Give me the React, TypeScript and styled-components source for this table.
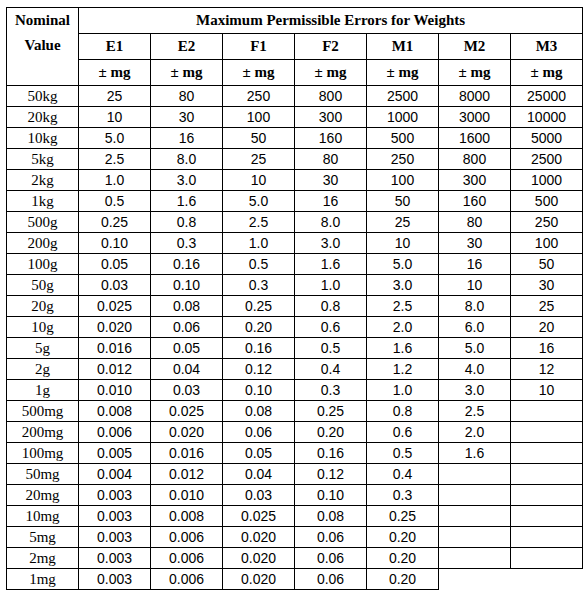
import React from 'react';
import styled, { createGlobalStyle } from 'styled-components';

const GlobalStyle = createGlobalStyle`
  html, body {
    margin: 0;
    padding: 0;
    background: #ffffff;
  }
`;

const Page = styled.div`
  padding: 7px 0 0 6px;
  background: #ffffff;
`;

const Table = styled.table`
  table-layout: fixed;
  width: 576px;
  border-collapse: collapse;
  color: #000000;
`;

const Col = styled.col`
  width: 72px;
`;

const HeadRow = styled.tr`
  height: 26px;
`;

const HeadCell = styled.th<{ $top?: boolean }>`
  border: 1px solid #000;
  padding: 0;
  font-family: 'Liberation Serif', 'Times New Roman', serif;
  font-weight: bold;
  font-size: 15px;
  text-align: center;
  vertical-align: ${(p) => (p.$top ? 'top' : 'middle')};
`;

const NominalHead = styled(HeadCell)`
  line-height: 25px;
  padding-top: 0;
`;

const UnitCell = styled(HeadCell)`
  font-size: 15px;
`;

const Row = styled.tr`
  height: 21px;
`;

const NameCell = styled.td`
  border: 1px solid #000;
  padding: 0;
  font-family: 'Liberation Serif', 'Times New Roman', serif;
  font-size: 15px;
  line-height: 18px;
  text-align: center;
`;

const ValueCell = styled.td`
  border: 1px solid #000;
  padding: 0;
  font-family: 'Liberation Sans', Arial, sans-serif;
  font-size: 14px;
  line-height: 18px;
  text-align: center;
`;

const classes = ['E1', 'E2', 'F1', 'F2', 'M1', 'M2', 'M3'];

// null = no cell at all, '' = empty bordered cell
const rows: [string, (string | null)[]][] = [
  ['50kg', ['25', '80', '250', '800', '2500', '8000', '25000']],
  ['20kg', ['10', '30', '100', '300', '1000', '3000', '10000']],
  ['10kg', ['5.0', '16', '50', '160', '500', '1600', '5000']],
  ['5kg', ['2.5', '8.0', '25', '80', '250', '800', '2500']],
  ['2kg', ['1.0', '3.0', '10', '30', '100', '300', '1000']],
  ['1kg', ['0.5', '1.6', '5.0', '16', '50', '160', '500']],
  ['500g', ['0.25', '0.8', '2.5', '8.0', '25', '80', '250']],
  ['200g', ['0.10', '0.3', '1.0', '3.0', '10', '30', '100']],
  ['100g', ['0.05', '0.16', '0.5', '1.6', '5.0', '16', '50']],
  ['50g', ['0.03', '0.10', '0.3', '1.0', '3.0', '10', '30']],
  ['20g', ['0.025', '0.08', '0.25', '0.8', '2.5', '8.0', '25']],
  ['10g', ['0.020', '0.06', '0.20', '0.6', '2.0', '6.0', '20']],
  ['5g', ['0.016', '0.05', '0.16', '0.5', '1.6', '5.0', '16']],
  ['2g', ['0.012', '0.04', '0.12', '0.4', '1.2', '4.0', '12']],
  ['1g', ['0.010', '0.03', '0.10', '0.3', '1.0', '3.0', '10']],
  ['500mg', ['0.008', '0.025', '0.08', '0.25', '0.8', '2.5', '']],
  ['200mg', ['0.006', '0.020', '0.06', '0.20', '0.6', '2.0', '']],
  ['100mg', ['0.005', '0.016', '0.05', '0.16', '0.5', '1.6', '']],
  ['50mg', ['0.004', '0.012', '0.04', '0.12', '0.4', '', '']],
  ['20mg', ['0.003', '0.010', '0.03', '0.10', '0.3', '', '']],
  ['10mg', ['0.003', '0.008', '0.025', '0.08', '0.25', '', '']],
  ['5mg', ['0.003', '0.006', '0.020', '0.06', '0.20', '', '']],
  ['2mg', ['0.003', '0.006', '0.020', '0.06', '0.20', '', '']],
  ['1mg', ['0.003', '0.006', '0.020', '0.06', '0.20', null, null]],
];

const App: React.FC = () => {
  return (
    <>
      <GlobalStyle />
      <Page>
        <Table>
          <colgroup>
            {Array.from({ length: 8 }).map((_, i) => (
              <Col key={i} />
            ))}
          </colgroup>
          <thead>
            <HeadRow>
              <NominalHead rowSpan={3} $top>
                Nominal
                <br />
                Value
              </NominalHead>
              <HeadCell colSpan={7}>Maximum Permissible Errors for Weights</HeadCell>
            </HeadRow>
            <HeadRow>
              {classes.map((c) => (
                <HeadCell key={c}>{c}</HeadCell>
              ))}
            </HeadRow>
            <HeadRow>
              {classes.map((c) => (
                <UnitCell key={c}>± mg</UnitCell>
              ))}
            </HeadRow>
          </thead>
          <tbody>
            {rows.map(([name, values]) => (
              <Row key={name}>
                <NameCell>{name}</NameCell>
                {values.map((v, i) => (v === null ? null : <ValueCell key={i}>{v}</ValueCell>))}
              </Row>
            ))}
          </tbody>
        </Table>
      </Page>
    </>
  );
};

export default App;
